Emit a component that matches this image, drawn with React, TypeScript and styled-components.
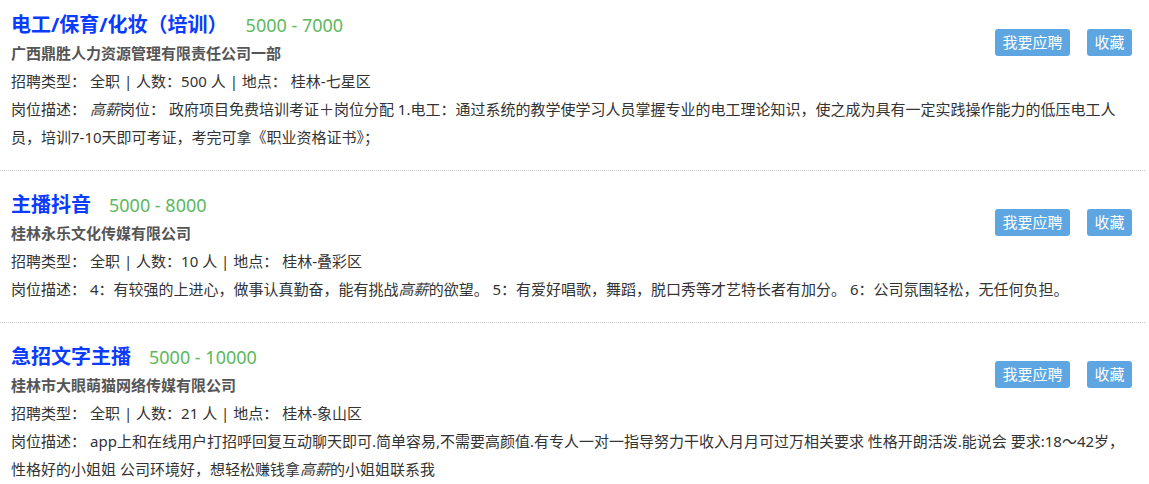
import styled, { createGlobalStyle } from "styled-components";

interface Job {
  id: number;
  title: string;
  salary: string;
  company: string;
  type: string;
  count: number;
  area: string;
  desc: (string | { em: string })[];
}

const jobs: Job[] = [
  {
    id: 1,
    title: "电工/保育/化妆（培训）",
    salary: "5000 - 7000",
    company: "广西鼎胜人力资源管理有限责任公司一部",
    type: "全职",
    count: 500,
    area: "桂林-七星区",
    desc: [
      { em: "高薪" },
      "岗位： 政府项目免费培训考证＋岗位分配 1.电工：通过系统的教学使学习人员掌握专业的电工理论知识，使之成为具有一定实践操作能力的低压电工人员，培训7-10天即可考证，考完可拿《职业资格证书》；",
    ],
  },
  {
    id: 2,
    title: "主播抖音",
    salary: "5000 - 8000",
    company: "桂林永乐文化传媒有限公司",
    type: "全职",
    count: 10,
    area: "桂林-叠彩区",
    desc: [
      "4：有较强的上进心，做事认真勤奋，能有挑战",
      { em: "高薪" },
      "的欲望。 5：有爱好唱歌，舞蹈，脱口秀等才艺特长者有加分。 6：公司氛围轻松，无任何负担。",
    ],
  },
  {
    id: 3,
    title: "急招文字主播",
    salary: "5000 - 10000",
    company: "桂林市大眼萌猫网络传媒有限公司",
    type: "全职",
    count: 21,
    area: "桂林-象山区",
    desc: [
      "app上和在线用户打招呼回复互动聊天即可.简单容易,不需要高颜值.有专人一对一指导努力干收入月月可过万相关要求 性格开朗活泼.能说会 要求:18～42岁，性格好的小姐姐 公司环境好，想轻松赚钱拿",
      { em: "高薪" },
      "的小姐姐联系我",
    ],
  },
];

const GlobalStyle = createGlobalStyle`
  body {
    margin: 0;
    background: #fff;
    font-family: "Noto Sans", "Noto Sans CJK SC", sans-serif;
  }
`;

const List = styled.ul`
  width: 1145px;
  margin: 0;
  padding: 0;
  list-style: none;
`;

const Card = styled.li`
  padding: 20px 13px 19px 11px;
  border-bottom: 1px dotted #c8c8c8;

  &:first-child {
    padding-top: 11px;
  }
`;

const Head = styled.div`
  display: flex;
  justify-content: space-between;
  align-items: flex-start;
`;

const Info = styled.div`
  display: flex;
  flex-direction: column;
`;

const TitleRow = styled.div`
  display: flex;
  align-items: baseline;
  gap: 18px;
  height: 28px;
`;

const Title = styled.h2`
  margin: 0;
  font-size: 20px;
  font-weight: 700;
  line-height: 28px;
  color: #0a3cff;
`;

const Salary = styled.span`
  font-size: 18px;
  line-height: 28px;
  color: #5cb85c;
`;

const Company = styled.div`
  font-size: 15px;
  font-weight: 700;
  line-height: 28px;
  color: #555;
`;

const Row = styled.div`
  font-size: 15px;
  line-height: 28px;
  color: #333;

  em {
    font-style: italic;
  }
`;

const Label = styled.span`
  margin-right: 4px;
`;

const Desc = styled(Row)`
  margin-right: 7px;
`;

const Actions = styled.div`
  display: flex;
  gap: 17px;
  padding-top: 18px;
`;

const Btn = styled.button`
  height: 27px;
  padding: 0 7.5px;
  border: 0;
  border-radius: 3px;
  background: #5ea6e1;
  color: #fff;
  font-family: inherit;
  font-size: 15px;
  line-height: 27px;
  cursor: pointer;
`;

function App() {
  return (
    <>
      <GlobalStyle />
      <List>
        {jobs.map((job) => (
          <Card key={job.id}>
            <Head>
              <Info>
                <TitleRow>
                  <Title>{job.title}</Title>
                  <Salary>{job.salary}</Salary>
                </TitleRow>
                <Company>{job.company}</Company>
                <Row>
                  <Label>招聘类型：</Label>
                  {job.type} | 人数：{job.count} 人 | 地点：
                  <Label />
                  {job.area}
                </Row>
              </Info>
              <Actions>
                <Btn>我要应聘</Btn>
                <Btn>收藏</Btn>
              </Actions>
            </Head>
            <Desc>
              <Label>岗位描述：</Label>
              {job.desc.map((part, i) =>
                typeof part === "string" ? part : <em key={i}>{part.em}</em>
              )}
            </Desc>
          </Card>
        ))}
      </List>
    </>
  );
}

export default App;
